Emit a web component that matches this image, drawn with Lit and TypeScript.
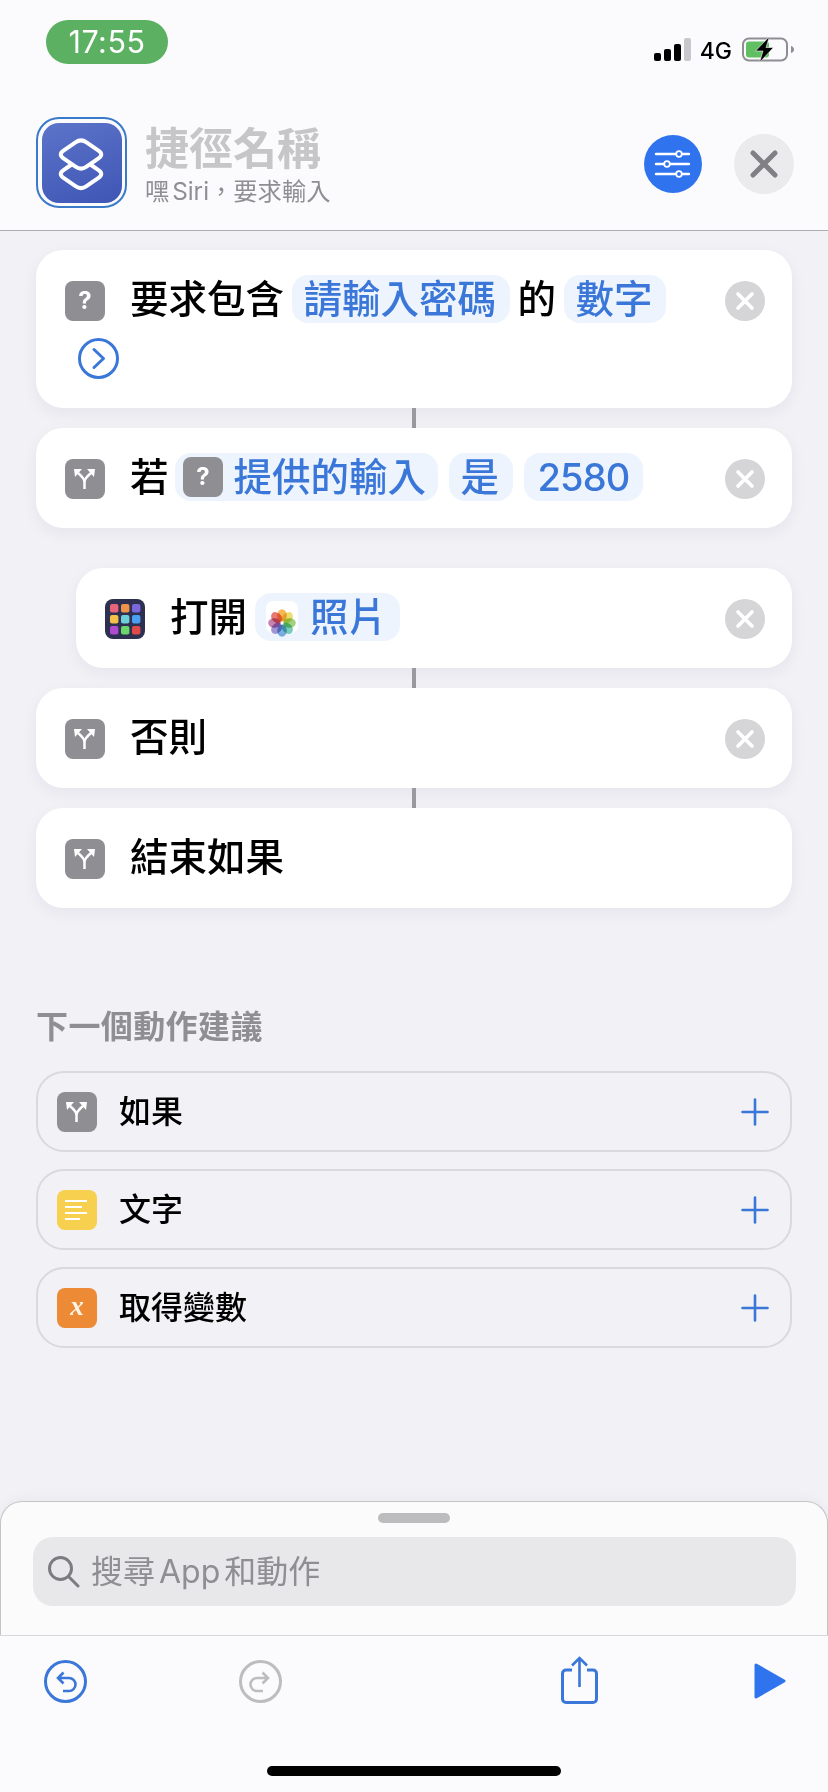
import { LitElement, html, css, svg } from 'lit';
import { customElement } from 'lit/decorators.js';

const branchIcon = html`<span class="tile gray">
  <svg width="40" height="40" viewBox="0 0 40 40" fill="none" stroke="#fff" stroke-width="2.5">
    <path d="M19.5 30V23Q19.5 19.5 13 14M19.5 23Q19.5 19.5 26 14" />
    <path d="M9 10h8L10 18zM30 10h-8l7 8z" fill="#fff" stroke="none" />
  </svg>
</span>`;

const askIcon = html`<span class="tile gray ask">?</span>`;

const appsColors = ['#e8647a', '#ee9347', '#7a68dc', '#f5c04a', '#6fcfd8', '#4a9ff0', '#b04ad0', '#6bd66b', '#e04a48'];
const appsIcon = html`<span class="tile apps">
  <svg width="40" height="40" viewBox="0 0 40 40">
    ${appsColors.map(
      (c, i) => svg`<rect x=${5 + (i % 3) * 11} y=${5 + Math.floor(i / 3) * 11} width="8.4" height="8.4" rx="2" fill=${c} />`
    )}
  </svg>
</span>`;

const petals = ['#f4a62a', '#e6d44a', '#86c75f', '#58bfa8', '#5f9fdc', '#8a7cc9', '#b8649f', '#e0574f'];
const photosIcon = html`<span class="photos">
  <svg width="32" height="32" viewBox="0 0 32 32">
    ${petals.map(
      (c, i) => svg`<ellipse class="petal" cx="16" cy="8.4" rx="4.8" ry="6.2" fill=${c} fill-opacity="0.8" transform="rotate(${i * 45} 16 16)" />`
    )}
  </svg>
</span>`;

const closeBtn = html`<svg class="remove" width="40" height="40" viewBox="0 0 40 40">
  <circle cx="20" cy="20" r="20" fill="#d5d5d8" />
  <path d="M13 13l14 14M27 13L13 27" stroke="#fff" stroke-width="3.6" stroke-linecap="round" />
</svg>`;

const plus = html`<svg width="28" height="28" viewBox="0 0 28 28" stroke="#3a77d8" stroke-width="2.6" stroke-linecap="round">
  <path d="M14 1.5v25M1.5 14h25" />
</svg>`;

@customElement('app-root')
export class AppRoot extends LitElement {
  static styles = css`
    :host {
      display: flex;
      flex-direction: column;
      width: 828px;
      height: 1792px;
      overflow: hidden;
      background: #f1f1f6;
      font-family: Inter, 'Noto Sans CJK TC', sans-serif;
      color: #000;
    }
    .top {
      background: #fbfbfd;
      border-bottom: 1px solid #aeaeb2;
      height: 231px;
      box-sizing: border-box;
    }
    .status {
      display: flex;
      justify-content: space-between;
      align-items: flex-start;
      height: 117px;
      box-sizing: border-box;
      padding: 20px 33px 0 46px;
    }
    .time {
      width: 122px;
      height: 44px;
      border-radius: 22px;
      background: #5bb062;
      color: #fff;
      font-size: 30.5px;
      line-height: 44px;
      text-align: center;
      letter-spacing: 0.5px;
    }
    .indicators {
      display: flex;
      align-items: flex-start;
      margin-top: 18px;
    }
    .bars {
      display: flex;
      align-items: flex-end;
      gap: 3px;
      height: 23px;
    }
    .bars i {
      display: block;
      width: 7px;
      border-radius: 2px;
      background: #000;
    }
    .net {
      font-size: 23px;
      font-weight: 500;
      line-height: 24px;
      margin: 1px 10px 0 9px;
    }
    .battery {
      margin-top: -2px;
    }
    .head {
      display: flex;
      padding: 0 34px 0 36px;
    }
    .logo {
      display: flex;
      align-items: center;
      justify-content: center;
      width: 91px;
      height: 91px;
      box-sizing: border-box;
      border: 2px solid #3a7ac9;
      border-radius: 23px;
    }
    .logo span {
      display: block;
      width: 80px;
      height: 80px;
      border-radius: 17px;
      background: linear-gradient(160deg, #5c74c9, #3f55b5);
    }
    .names {
      margin-left: 18px;
      padding-top: 7px;
    }
    .name {
      font-size: 44px;
      line-height: 50px;
      font-weight: 700;
      color: #c6c6c8;
    }
    .phrase {
      margin-top: 2px;
      font-size: 24.3px;
      line-height: 30px;
      word-spacing: -4px;
      color: #8e8e93;
    }
    .head-actions {
      display: flex;
      align-items: center;
      gap: 32px;
      margin: 2px 0 0 auto;
    }
    main {
      flex: 1;
      display: flex;
      flex-direction: column;
      padding: 19px 36px 0;
    }
    .card {
      display: flex;
      align-items: flex-start;
      padding: 25px 27px 27px 29px;
      background: #fff;
      border-radius: 27px;
      box-shadow: 0 5px 16px rgba(40, 40, 70, 0.06);
    }
    .card.nested {
      margin-left: 40px;
    }
    .flow {
      flex: 1;
      display: flex;
      flex-wrap: wrap;
      align-items: center;
      column-gap: 8px;
      row-gap: 15px;
      font-size: 38.5px;
      font-weight: 500;
      line-height: 48px;
    }
    .flow > .tile {
      margin: 4px 17px 0 0;
    }
    .tight {
      margin-right: -1.5px;
    }
    .chip {
      display: flex;
      align-items: center;
      height: 48px;
      padding: 0 13.5px 0 11.5px;
      border-radius: 16px;
      background: #edf4fd;
      color: #3a77d8;
    }
    .chip + .chip {
      margin-left: 3px;
    }
    .chip.with-icon {
      padding: 0 12px 0 8px;
      gap: 10.5px;
    }
    .chip.with-photo {
      padding: 0 13px 0 11px;
      gap: 12px;
    }
    .chip.digits {
      letter-spacing: -0.9px;
      font-size: 38px;
      padding: 0 14px;
    }
    .chip .tile {
      margin-top: 0;
    }
    .more {
      flex-basis: 100%;
      height: 41px;
      margin-left: 13px;
      padding-bottom: 2px;
    }
    .tile {
      display: block;
      flex: none;
      width: 40px;
      height: 40px;
      border-radius: 8px;
    }
    .gray {
      background: #8e8e93;
    }
    .ask {
      color: #fff;
      font-size: 24px;
      font-weight: 700;
      line-height: 40px;
      text-align: center;
    }
    .apps {
      background: #2d3050;
    }
    .yellow {
      background: #f7d04f;
    }
    .orange {
      background: #ec8a35;
      color: #fff6e8;
      font: italic 700 27px/36px 'Liberation Serif', serif;
      text-align: center;
    }
    .photos {
      display: block;
      width: 32px;
      height: 32px;
      border-radius: 7px;
      background: #fff;
    }
    .petal {
      mix-blend-mode: multiply;
    }
    .remove {
      flex: none;
      margin-top: 6px;
    }
    .link {
      width: 4px;
      height: 20px;
      margin-left: 376px;
      background: #99999f;
    }
    .spacer {
      height: 40px;
    }
    h2 {
      margin: 99px 0 24px;
      font-size: 32px;
      line-height: 40px;
      font-weight: 700;
      letter-spacing: 0.4px;
      color: #8e8e93;
    }
    .suggestions {
      display: flex;
      flex-direction: column;
      gap: 17px;
    }
    .suggestion {
      display: flex;
      align-items: center;
      height: 81px;
      box-sizing: border-box;
      padding: 0 21px 0 19px;
      border: 2px solid #d9d9de;
      border-radius: 28px;
      font-size: 32px;
      font-weight: 500;
    }
    .suggestion .tile {
      margin-right: 22px;
    }
    .suggestion .label {
      margin-top: -5px;
    }
    .suggestion svg:last-child {
      margin-left: auto;
    }
    .sheet {
      height: 134px;
      box-sizing: border-box;
      padding-top: 11px;
      background: #fbfbfc;
      border: 1px solid #c4c4c8;
      border-bottom: none;
      border-radius: 22px 22px 0 0;
      box-shadow: 0 -4px 12px rgba(0, 0, 0, 0.03);
    }
    .grip {
      width: 72px;
      height: 10px;
      margin: 0 auto 14px;
      border-radius: 5px;
      background: #bcbcbf;
    }
    .search {
      display: flex;
      align-items: center;
      height: 69px;
      margin: 0 31px 0 32px;
      padding-left: 15px;
      border-radius: 20px;
      background: #e8e8ea;
      color: #8e8e93;
      font-size: 32px;
      word-spacing: -5px;
      gap: 11px;
    }
    .search span {
      margin-top: -5px;
    }
    .tools {
      flex: none;
      display: flex;
      align-items: flex-start;
      height: 157px;
      box-sizing: border-box;
      padding: 20px 0 0 44px;
      background: #fbfbfd;
      border-top: 1px solid #d8d8dc;
      position: relative;
    }
    .tools svg {
      display: block;
    }
    .tools .redo {
      margin: 4px 0 0 152px;
    }
    .tools .undo {
      margin-top: 4px;
    }
    .tools .share {
      margin-left: 279px;
    }
    .tools .play {
      margin: 7px 0 0 156px;
    }
    .home {
      position: absolute;
      left: 267px;
      top: 130px;
      width: 294px;
      height: 10px;
      border-radius: 5px;
      background: #000;
    }
  `;

  render() {
    return html`
      <div class="top">
        <div class="status">
          <div class="time">17:55</div>
          <div class="indicators">
            <div class="bars">
              <i style="height:8px"></i>
              <i style="height:12px"></i>
              <i style="height:17px"></i>
              <i style="height:23px;background:#c7c7cc"></i>
            </div>
            <div class="net">4G</div>
            <svg class="battery" width="53" height="27" viewBox="0 0 53 27">
              <rect x="1" y="2.5" width="44" height="22" rx="6" fill="none" stroke="#8e8e93" stroke-width="2" />
              <rect x="4" y="5.5" width="23" height="16" rx="3" fill="#5fbf62" />
              <path d="M49 10c2 .6 3 2 3 3.5s-1 3-3 3.5z" fill="#8e8e93" />
              <path d="M27.5 0.5L13.5 15H21L17.5 26.5L31.5 11.5H24z" fill="#000" stroke="#fbfbfd" stroke-width="0.6" />
            </svg>
          </div>
        </div>
        <div class="head">
          <div class="logo">
            <span>
              <svg width="80" height="80" viewBox="0 0 80 80" fill="none" stroke="#fff" stroke-width="4">
                <path d="M33.5 19.3Q39 15.5 44.5 19.3L56.5 27.7Q62 31.5 56.5 35.3L44.5 43.7Q39 47.5 33.5 43.7L21.5 35.3Q16 31.5 21.5 27.7Z" />
                <path d="M30 41.25L21.5 47.2Q16 51 21.5 54.8L33.5 63.2Q39 67 44.5 63.2L56.5 54.8Q62 51 56.5 47.2L48 41.25" />
              </svg>
            </span>
          </div>
          <div class="names">
            <div class="name">捷徑名稱</div>
            <div class="phrase">嘿 Siri，要求輸入</div>
          </div>
          <div class="head-actions">
            <svg width="58" height="58" viewBox="0 0 58 58">
              <circle cx="29" cy="29" r="29" fill="#2f74ee" />
              <path d="M12 19h33M12 29h33M12 39h33" stroke="#fff" stroke-width="2.4" stroke-linecap="round" />
              <g fill="#2f74ee" stroke="#fff" stroke-width="1.8">
                <circle cx="35" cy="19" r="2.8" />
                <circle cx="23" cy="29" r="2.8" />
                <circle cx="35" cy="39" r="2.8" />
              </g>
            </svg>
            <svg width="60" height="60" viewBox="0 0 60 60">
              <circle cx="30" cy="30" r="30" fill="#ebebed" />
              <path d="M19 19l22 22M41 19L19 41" stroke="#808085" stroke-width="5" stroke-linecap="round" />
            </svg>
          </div>
        </div>
      </div>

      <main>
        <div class="card">
          <div class="flow">
            ${askIcon}
            <span>要求包含</span>
            <span class="chip">請輸入密碼</span>
            <span>的</span>
            <span class="chip">數字</span>
            <svg class="more" viewBox="0 0 41 41" width="41" height="41" fill="none" stroke="#3a77d8" stroke-width="3" preserveAspectRatio="xMinYMin">
              <circle cx="20.5" cy="20.5" r="19" />
              <path d="M16 11.5l9.5 9-9.5 9" stroke-linecap="round" stroke-linejoin="round" />
            </svg>
          </div>
          ${closeBtn}
        </div>
        <div class="link"></div>
        <div class="card">
          <div class="flow">
            ${branchIcon}
            <span class="tight">若</span>
            <span class="chip with-icon">${askIcon}提供的輸入</span>
            <span class="chip">是</span>
            <span class="chip digits">2580</span>
          </div>
          ${closeBtn}
        </div>
        <div class="spacer"></div>
        <div class="card nested">
          <div class="flow">
            ${appsIcon}
            <span>打開</span>
            <span class="chip with-photo">${photosIcon}照片</span>
          </div>
          ${closeBtn}
        </div>
        <div class="link"></div>
        <div class="card">
          <div class="flow">${branchIcon}<span>否則</span></div>
          ${closeBtn}
        </div>
        <div class="link"></div>
        <div class="card">
          <div class="flow">${branchIcon}<span>結束如果</span></div>
        </div>

        <h2>下一個動作建議</h2>
        <div class="suggestions">
          <div class="suggestion">${branchIcon}<span class="label">如果</span>${plus}</div>
          <div class="suggestion">
            <span class="tile yellow">
              <svg width="40" height="40" viewBox="0 0 40 40" stroke="#fff" stroke-width="2">
                <path d="M8 11h22M8 17h17M8 23h22M8 29h15" />
              </svg>
            </span>
            <span class="label">文字</span>${plus}
          </div>
          <div class="suggestion"><span class="tile orange">x</span><span class="label">取得變數</span>${plus}</div>
        </div>
      </main>

      <div class="sheet">
        <div class="grip"></div>
        <div class="search">
          <svg width="32" height="32" viewBox="0 0 32 32" fill="none" stroke="#7c7c80" stroke-width="3">
            <circle cx="12.5" cy="12.5" r="11" />
            <path d="M20.5 20.5L30 30" stroke-linecap="round" />
          </svg>
          <span>搜尋 App 和動作</span>
        </div>
      </div>
      <div class="tools">
        <svg class="undo" width="43" height="43" viewBox="0 0 43 43" fill="none" stroke="#3a77d8" stroke-width="3">
          <circle cx="21.5" cy="21.5" r="20" />
          <path d="M14 18H25a6.5 6.5 0 0 1 0 13H19M19.5 12.5L14 18l5.5 5.5" stroke-width="2.6" />
        </svg>
        <svg class="redo" width="43" height="43" viewBox="0 0 43 43" fill="none" stroke="#bdbdc0" stroke-width="3">
          <circle cx="21.5" cy="21.5" r="20" />
          <path d="M29 18H18a6.5 6.5 0 0 0 0 13H24M23.5 12.5L29 18l-5.5 5.5" stroke-width="2.6" />
        </svg>
        <svg class="share" width="37" height="48" viewBox="0 0 37 48" fill="none" stroke="#3a77d8" stroke-width="3">
          <path d="M11 14H5A3.5 3.5 0 0 0 1.5 17.5V43A3.5 3.5 0 0 0 5 46.5H32A3.5 3.5 0 0 0 35.5 43V17.5A3.5 3.5 0 0 0 32 14H26" />
          <path d="M18.5 2V31M11 9.5L18.5 2L26 9.5" stroke-width="2.6" />
        </svg>
        <svg class="play" width="32" height="36" viewBox="0 0 32 36">
          <path d="M2 2L30 18L2 34Z" fill="#2f74ee" stroke="#2f74ee" stroke-width="3" stroke-linejoin="round" />
        </svg>
        <div class="home"></div>
      </div>
    `;
  }
}
